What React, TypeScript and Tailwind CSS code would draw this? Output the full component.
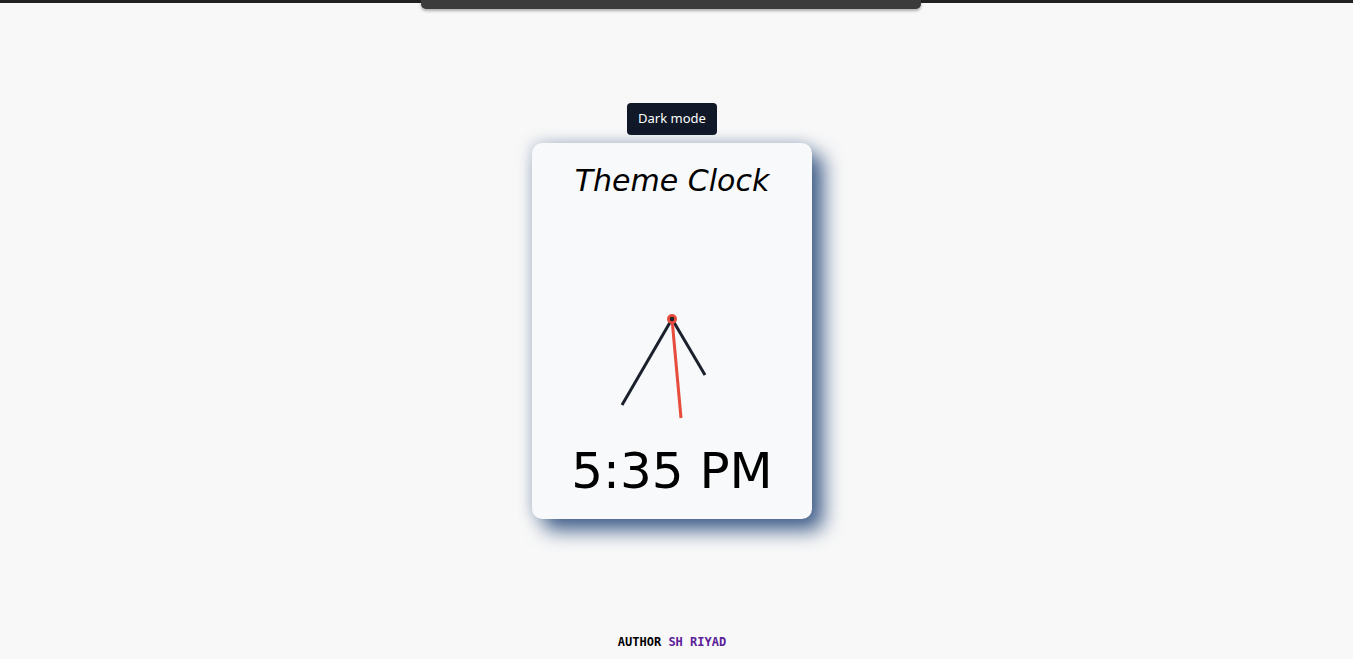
export default function App() {
  return (
    <div className="relative h-[659px] w-full overflow-hidden bg-[#f8f8f8]">
      {/* top strip + pull-down bar */}
      <div className="h-[3px] w-full bg-[#222]" />
      <div className="absolute left-[421px] top-0 h-[9px] w-[500px] rounded-b-[5px] bg-[#3b3b3b] shadow-[0_2px_3px_rgba(0,0,0,0.3)]" />

      <div className="flex h-[656px] w-[1344px] flex-col items-center">
        <button className="mt-[100px] flex h-[32px] items-center rounded-[4px] bg-[#111827] px-[11px] text-[13px] text-white [font-family:'Noto_Sans',sans-serif]">
          Dark mode
        </button>

        <div className="mt-[8px] flex h-[376px] w-[280px] flex-col items-center rounded-[10px] bg-[#f8f9fa] shadow-[11px_11px_20px_#3f5d89,-2px_-2px_14px_rgba(70,98,140,0.25)]">
          <h1 className="mt-[20px] text-[30px] italic leading-[35px] text-black [font-family:'DejaVu_Sans',sans-serif]">
            Theme Clock
          </h1>

          <svg width="280" height="244" viewBox="0 0 280 244" className="shrink-0">
            {/* hour */}
            <line x1="140" y1="121" x2="173" y2="177" stroke="#1a202c" strokeWidth="3" />
            {/* minute */}
            <line x1="140" y1="121" x2="90" y2="207" stroke="#1a202c" strokeWidth="3" />
            {/* second */}
            <line x1="140" y1="121" x2="149" y2="220" stroke="#e74c3c" strokeWidth="3" />
            <circle cx="140" cy="121" r="5" fill="#e74c3c" />
            <circle cx="140" cy="121" r="2.2" fill="#1a202c" />
          </svg>

          <div className="text-[50px] leading-[58px] text-black [font-family:'DejaVu_Sans',sans-serif]">
            5:35 PM
          </div>
        </div>

        <div className="mt-auto mb-[10px] text-[12px] font-bold leading-[14px] [font-family:'DejaVu_Sans_Mono',monospace]">
          <span className="text-black">AUTHOR </span>
          <span className="text-[#5b2199]">SH RIYAD</span>
        </div>
      </div>
    </div>
  );
}
